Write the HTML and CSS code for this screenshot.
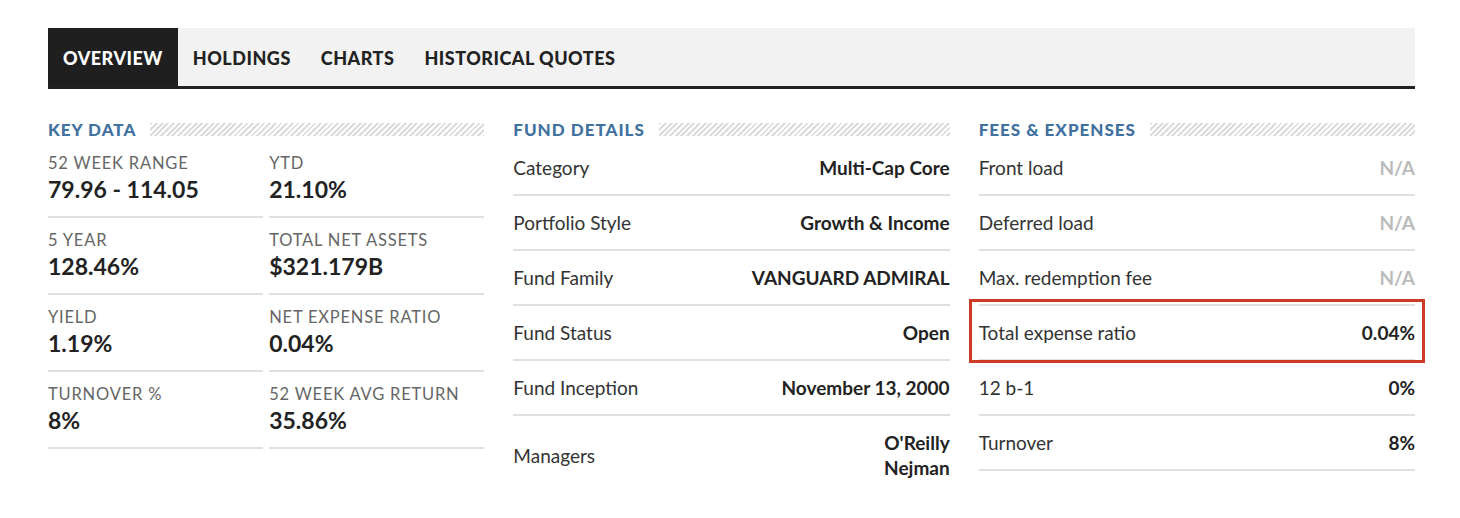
FILE: index.html
```html
<!DOCTYPE html>
<html lang="en">
<head>
  <meta charset="UTF-8" />
  <title>Fund Overview</title>
  <link rel="stylesheet" href="styles.css">
</head>
<body>
  <nav class="tabs">
    <a class="tab active" href="#">OVERVIEW</a>
    <a class="tab" href="#">HOLDINGS</a>
    <a class="tab" href="#">CHARTS</a>
    <a class="tab" href="#">HISTORICAL QUOTES</a>
  </nav>

  <div class="columns">
    <section class="col">
      <h2 class="section-title"><span>KEY DATA</span></h2>
      <div class="key-grid">
        <div class="cell"><p class="label">52 WEEK RANGE</p><p class="value">79.96 - 114.05</p></div>
        <div class="cell"><p class="label">YTD</p><p class="value">21.10%</p></div>
        <div class="cell"><p class="label">5 YEAR</p><p class="value">128.46%</p></div>
        <div class="cell"><p class="label">TOTAL NET ASSETS</p><p class="value">$321.179B</p></div>
        <div class="cell"><p class="label">YIELD</p><p class="value">1.19%</p></div>
        <div class="cell"><p class="label">NET EXPENSE RATIO</p><p class="value">0.04%</p></div>
        <div class="cell"><p class="label">TURNOVER %</p><p class="value">8%</p></div>
        <div class="cell"><p class="label">52 WEEK AVG RETURN</p><p class="value">35.86%</p></div>
      </div>
    </section>

    <section class="col">
      <h2 class="section-title"><span>FUND DETAILS</span></h2>
      <div class="row"><span>Category</span><strong>Multi-Cap Core</strong></div>
      <div class="row"><span>Portfolio Style</span><strong>Growth &amp; Income</strong></div>
      <div class="row"><span>Fund Family</span><strong>VANGUARD ADMIRAL</strong></div>
      <div class="row"><span>Fund Status</span><strong>Open</strong></div>
      <div class="row"><span>Fund Inception</span><strong>November 13, 2000</strong></div>
      <div class="row last"><span>Managers</span><strong>O'Reilly<br>Nejman</strong></div>
    </section>

    <section class="col">
      <h2 class="section-title"><span>FEES &amp; EXPENSES</span></h2>
      <div class="row"><span>Front load</span><strong class="na">N/A</strong></div>
      <div class="row"><span>Deferred load</span><strong class="na">N/A</strong></div>
      <div class="row"><span>Max. redemption fee</span><strong class="na">N/A</strong></div>
      <div class="row highlight"><span>Total expense ratio</span><strong>0.04%</strong></div>
      <div class="row"><span>12 b-1</span><strong>0%</strong></div>
      <div class="row"><span>Turnover</span><strong>8%</strong></div>
    </section>
  </div>
</body>
</html>
```

FILE: styles.css
```css
body {
  margin: 0;
  padding: 28px 45px 0 48px;
  background: #fff;
  color: #222;
  font-family: 'Lato', 'Liberation Sans', sans-serif;
}
p {
  margin: 0;
}
.tabs {
  display: flex;
  background-color: #f2f2f2;
  border-bottom: 3px solid #222;
  height: 58px;
}
.tab {
  display: flex;
  align-items: center;
  padding: 1px 15px 0;
  color: #222;
  text-decoration: none;
  font-weight: 900;
  font-size: 18px;
  letter-spacing: 0.5px;
}
.tab.active {
  background-color: #1f1f1f;
  color: #fff;
}
.columns {
  display: grid;
  grid-template-columns: 1fr 1fr 1fr;
  column-gap: 29px;
  margin-top: 29px;
}
.section-title {
  display: flex;
  align-items: center;
  margin: 0 0 1px;
  height: 22px;
  font-size: 17px;
  font-weight: 900;
  letter-spacing: 1px;
  color: #41719f;
}
.section-title::after {
  content: '';
  flex: 1;
  height: 13px;
  margin-left: 14px;
  background: repeating-linear-gradient(135deg, #dcdcdc 0 2px, transparent 2px 4px);
}
.key-grid {
  display: grid;
  grid-template-columns: 1fr 1fr;
  column-gap: 6px;
}
.cell {
  padding: 12px 0 13px;
  border-bottom: 2px solid #e0e0e0;
}
.label {
  font-size: 16.5px;
  line-height: 20px;
  letter-spacing: 0.8px;
  color: #666;
}
.value {
  margin-top: 3px;
  font-size: 23px;
  line-height: 27px;
  font-weight: 700;
  color: #222;
}
.row {
  position: relative;
  display: flex;
  justify-content: space-between;
  align-items: center;
  padding: 14px 0;
  border-bottom: 2px solid #e0e0e0;
  font-size: 19px;
  line-height: 25px;
  color: #333;
}
.row strong {
  font-weight: 700;
  color: #222;
  text-align: right;
}
.row strong.na {
  color: #bbb;
}
.row.last {
  border-bottom: none;
}
.highlight::after {
  content: '';
  position: absolute;
  top: -7px;
  bottom: -4px;
  left: -10px;
  right: -10px;
  border: 3px solid #cc3b24;
}
```
